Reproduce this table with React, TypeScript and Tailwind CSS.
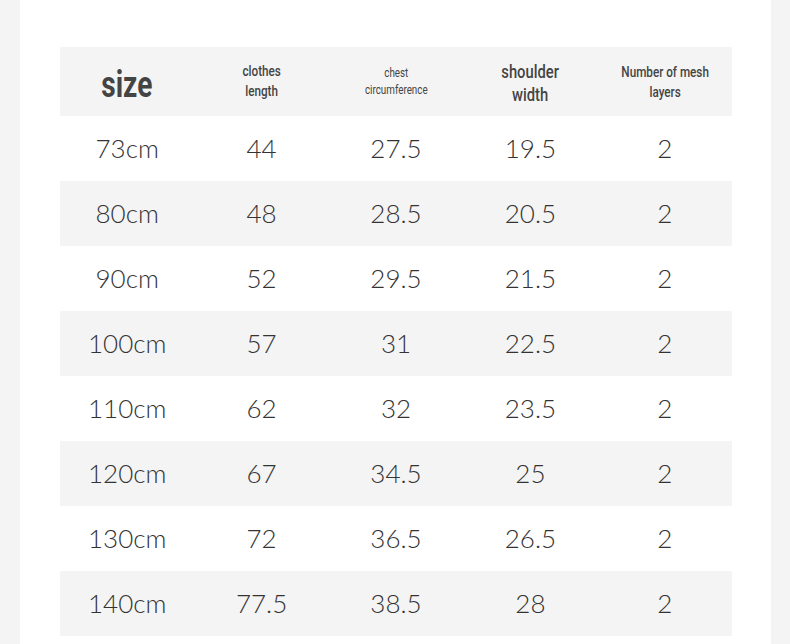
import React from "react";

const rows = [
  ["73cm", "44", "27.5", "19.5", "2"],
  ["80cm", "48", "28.5", "20.5", "2"],
  ["90cm", "52", "29.5", "21.5", "2"],
  ["100cm", "57", "31", "22.5", "2"],
  ["110cm", "62", "32", "23.5", "2"],
  ["120cm", "67", "34.5", "25", "2"],
  ["130cm", "72", "36.5", "26.5", "2"],
  ["140cm", "77.5", "38.5", "28", "2"],
];

const cond = { fontFamily: '"Roboto", "Liberation Sans", sans-serif' };

export default function App() {
  return (
    <div className="w-[790px] h-[644px] bg-[#f4f4f4] overflow-hidden">
      <div className="ml-[20px] w-[751px] h-[644px] bg-white pt-[47px] pl-[40px]">
        <div className="w-[672px]">
          <div className="grid grid-cols-5 h-[69px] bg-[#f4f4f4] text-[#444]" style={cond}>
            <div className="flex items-center justify-center pt-[6px]">
              <span className="inline-block scale-x-[0.78] text-[36px] font-bold leading-none">size</span>
            </div>
            <div className="flex items-center justify-center pb-[2px]">
              <span className="inline-block scale-x-[0.78] text-center text-[15px] leading-[20px] font-medium whitespace-nowrap">
                clothes<br />length
              </span>
            </div>
            <div className="flex items-center justify-center">
              <span className="inline-block scale-x-[0.82] text-center text-[12px] leading-[17px] whitespace-nowrap">
                chest<br />circumference
              </span>
            </div>
            <div className="flex items-center justify-center pt-[2px]">
              <span className="inline-block scale-x-[0.82] text-center text-[18px] leading-[23px] font-medium whitespace-nowrap">
                shoulder<br />width
              </span>
            </div>
            <div className="flex items-center justify-center">
              <span className="inline-block scale-x-[0.78] text-center text-[15px] leading-[20px] font-medium whitespace-nowrap">
                Number of mesh<br />layers
              </span>
            </div>
          </div>
          {rows.map((r, i) => (
            <div
              key={i}
              className={`grid grid-cols-5 h-[65px] text-[26px] font-light text-[#333] ${i % 2 === 1 ? "bg-[#f4f4f4]" : "bg-white"}`}
              style={{ fontFamily: '"Lato", "Open Sans", sans-serif' }}
            >
              {r.map((c, j) => (
                <div key={j} className="flex items-center justify-center">{c}</div>
              ))}
            </div>
          ))}
        </div>
      </div>
    </div>
  );
}
